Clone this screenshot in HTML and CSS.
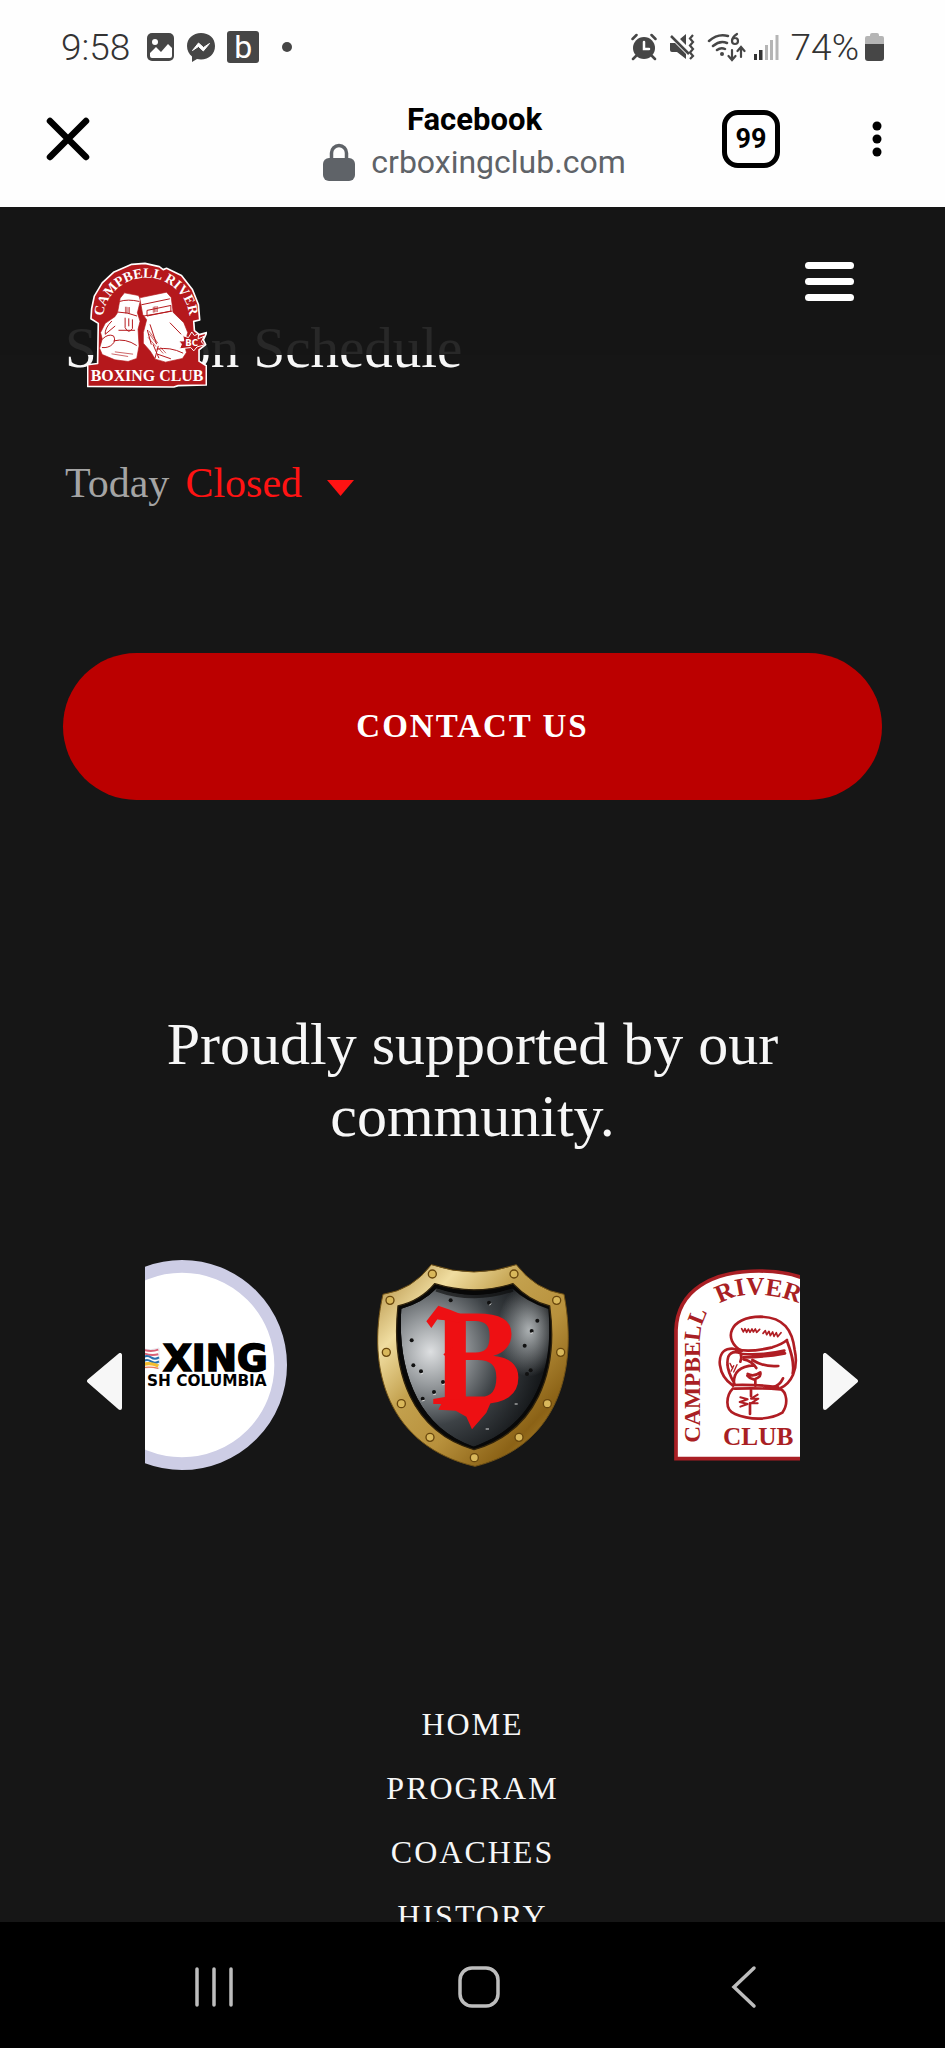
FILE: index.html
```
<!DOCTYPE html>
<html lang="en">
<head>
    <meta charset="UTF-8">
    <meta name="viewport" content="width=device-width, initial-scale=1.0">
    <title>Campbell River Boxing Club</title>
    <link rel="stylesheet" href="styles.css">
</head>
<body>
    <div class="status-bar">
        <span class="clock">9:58</span>
        <svg class="status-photo" width="27" height="28" viewBox="0 0 27 28">
            <rect width="27" height="28" rx="5" fill="#464646"/>
            <circle cx="8" cy="9" r="3" fill="#fff"/>
            <path d="M3 20l6-6 5 5 7-8 4 4v8q0 2-2 2H5q-2 0-2-2z" fill="#fff"/>
        </svg>
        <svg class="status-messenger" width="30" height="30" viewBox="0 0 30 30">
            <path d="M15 1C7 1 1 6.500 1 14c0 4.500 2 8 5 10.500V30l5-3c1.300.3 2.600.5 4 .5 8 0 14-5.500 14-13.500S23 1 15 1z" fill="#464646"/>
            <path d="M6.500 18.500l6-7.500 5 4.500 6-4-6.200 7.500-4.800-4.500z" fill="#fff" stroke="#fff" stroke-linejoin="round"/>
        </svg>
        <span class="status-b">b</span>
        <span class="status-dot"></span>
        <div class="status-right">
            <svg width="26" height="28" viewBox="0 0 26 28" fill="none" stroke="#464646" stroke-linecap="round">
                <circle cx="13" cy="15" r="11" fill="#464646" stroke="none"/>
                <path d="M1.500 6l4-4M24.500 6l-4-4M5 23l-3 3M21 23l3 3" stroke-width="2.500"/>
                <path d="M13 9v7h5" stroke="#fff" stroke-width="2.500"/>
            </svg>
            <svg width="26" height="28" viewBox="0 0 26 28" fill="none" stroke="#464646">
                <path d="M1 10h5l11 11v5l-9-7H3q-2 0-2-2zM11 6l6-5v11z" fill="#464646" stroke="none"/>
                <path d="M2 3l18 18" stroke-width="2.500"/>
                <path d="M24 2l-3 3.500 3 3.500-3 3.500 3 3.500-3 3.500 3 3.500-3 3" stroke-width="2.200"/>
            </svg>
            <svg class="wifi" width="39" height="30" viewBox="0 0 39 30" fill="none" stroke="#464646" stroke-width="2.500" stroke-linecap="round">
                <path d="M2 9Q11 1 21 4M6 14q7-6 14-3M10 18q4-3 8-1"/>
                <circle cx="15" cy="22" r="2" fill="#464646" stroke="none"/>
                <path d="M30 2q-5 3-5 7a3 3 0 1 0 6 0 3 3 0 0 0-6 0M25 18v9M21.500 24l3.500 4 3.500-4M34 25V16M30.500 19l3.500-4 3.500 4" stroke-width="2.200"/>
            </svg>
            <svg width="25" height="28" viewBox="0 0 25 28">
                <path d="M0 21h3v6H0zM5 17h3.500v10H5z" fill="#333"/>
                <path d="M11 12h3v15h-3zM16 7h3v20h-3zM21.500 2h3v25h-3z" fill="#b5b5b5"/>
            </svg>
            <span class="battery-text">74%</span>
            <svg class="battery" width="19" height="28" viewBox="0 0 19 28">
                <path d="M0 11V5q0-2 2-2h3V2q0-2 2-2h5q2 0 2 2v1h3q2 0 2 2v6z" fill="#b5b5b5"/>
                <path d="M0 11h19v14q0 3-3 3H3q-3 0-3-3z" fill="#464646"/>
            </svg>
        </div>
    </div>

    <header class="browser-bar">
        <button class="icon-button" type="button" aria-label="Close tab">
            <svg width="44" height="44" viewBox="0 0 44 44" stroke="#000" stroke-width="6.500" stroke-linecap="round">
                <path d="M4 4l36 36M40 4L4 40"/>
            </svg>
        </button>
        <div class="address">
            <div class="address-title">Facebook</div>
            <div class="address-url">
                <svg width="32" height="38" viewBox="0 0 32 38">
                    <path d="M8.500 17v-7a7.500 7.500 0 0 1 15 0v7" fill="none" stroke="#5f6368" stroke-width="3.500"/>
                    <rect y="15" width="32" height="23" rx="6" fill="#5f6368"/>
                </svg>
                <span>crboxingclub.com</span>
            </div>
        </div>
        <div class="browser-actions">
            <button class="tab-count" type="button" aria-label="Open tabs">99</button>
            <button class="icon-button" type="button" aria-label="More options">
                <svg width="52" height="44" viewBox="0 0 52 44">
                    <circle cx="26" cy="9" r="4.500"/>
                    <circle cx="26" cy="22" r="4.500"/>
                    <circle cx="26" cy="35" r="4.500"/>
                </svg>
            </button>
        </div>
    </header>

    <main class="page">
        <div class="site-header">
            <a class="site-logo" href="#home" aria-label="Campbell River Boxing Club">
                <svg width="120" height="126" viewBox="50 38 362 378">
                    <path d="M64 178L72 140 96 100 130 68 185 44 225 41 268 51 280 60 290 56 335 78 368 120 386 165 390 212 372 216 374 244 389 256 411 250 401 272 408 286 388 302 388 336 410 350 410 408 325 410 312 414 52 412 52 347 82 343 84 222 62 208z" fill="#b5181c" stroke="#fff" stroke-width="5" stroke-linejoin="round"/>
                    <path id="logo-arc" d="M98 216A131 131 0 0 1 360 214" fill="none"/>
                    <text class="logo-arc-text"><textPath href="#logo-arc" startOffset="50%">CAMPBELL RIVER</textPath></text>
                    <g fill="#fff" stroke="#b5181c" stroke-width="2">
                        <path d="M150 146L163 130 205 138 212 150 202 190 210 216 204 240 207 290 200 328 174 337 134 332 96 316 88 297 96 269 91 250 105 222 134 202 142 190z"/>
                        <path d="M209 145L290 128 304 144 310 189 342 220 354 250 344 285 350 310 338 328 287 339 256 330 241 306 220 282 220 250 230 211 218 195z"/>
                    </g>
                    <g fill="none" stroke="#b5181c" stroke-width="3">
                        <path d="M148 156q25-8 60 0M143 188q28 0 58 12M214 166l86-18M220 200l88-15M231 183l72-15v17l-72 15z"/>
                        <path d="M165 205v30q10 20 22 3v-28M176 207v24M125 215q-22 22-20 40l30-25M96 270q18-18 34-10 8 14-3 25-12 12-32 10M130 275q36-9 70 14M145 243l50 0"/>
                        <path d="M232 242l12 44M240 225l20 60M249 285l18 42M265 290l-10 38M260 300q40-8 80 12M263 315l40 14M300 220l34 35"/>
                    </g>
                    <g stroke="#b5181c" stroke-width="2">
                        <path d="M166 172v20M170 172v20M174 173v20M178 173v20M250 172v18M254 171v18M258 170v18M262 170v18M236 244l28 38M238 254l22 30M234 264l24 28M264 295l16 18M272 294l16 18M124 314l50 8M134 308l55 7"/>
                    </g>
                    <path d="M366 248l8 11 13-6-2 16 18-8-8 17 9 9-22 6-10 12-9-10-34 4 6-14-8-10 15 0-3-16 17 6z" fill="#b5181c" stroke="#fff" stroke-width="3"/>
                    <text class="logo-bc" x="366" y="291">BC</text>
                    <text class="logo-club" x="231" y="396">BOXING CLUB</text>
                </svg>
            </a>
            <button class="menu-button" type="button" aria-label="Menu">
                <span></span>
                <span></span>
                <span></span>
            </button>
        </div>

        <section class="hours">
            <h2>Session Schedule</h2>
            <div class="today">
                <span>Today</span>
                <button class="hours-toggle" type="button">
                    Closed
                    <svg width="29" height="18" viewBox="0 0 29 18"><path d="M1 1h27L14.500 17z" fill="#ff1313"/></svg>
                </button>
            </div>
        </section>

        <a class="contact-button" href="#contact">CONTACT US</a>

        <section class="sponsors">
            <h2>Proudly supported by our community.</h2>
            <div class="carousel">
                <button class="arrow" type="button" aria-label="Previous">
                    <svg width="35" height="57" viewBox="0 0 35 57"><path d="M2 28L33 2v53z" fill="#f7f7f7" stroke="#f7f7f7" stroke-width="4" stroke-linejoin="round"/></svg>
                </button>
                <div class="slides">
                    <svg class="slide" viewBox="54 90 630 630">
                        <circle cx="369" cy="405" r="296" fill="#fff" stroke="#cdcde5" stroke-width="38"/>
                        <g fill="none" stroke-width="6">
                            <path d="M250 356q25 8 50-2v62q-25-8-50 0z" fill="#fff" stroke="#d9d9e6" stroke-width="2"/>
                            <path d="M252 359q24 8 46 0M252 369q24 10 46 4" stroke="#d96076"/>
                            <path d="M252 382q12-8 24 0t24 0M252 394q12-8 24 0t24 0" stroke="#286fae"/>
                            <path d="M252 404q22-8 46 4" stroke="#f5bd2f" stroke-width="10"/>
                            <path d="M252 413q22-4 46 2" stroke="#ed7654" stroke-width="4"/>
                        </g>
                        <text class="bc-name" x="626" y="422">XING</text>
                        <text class="bc-region" x="623" y="468">SH COLUMBIA</text>
                    </svg>
                    <svg class="slide" viewBox="57 60 630 630">
                        <defs>
                            <linearGradient id="gold" x1="0" y1="0" x2="1" y2="1">
                                <stop offset="0" stop-color="#a98336"/>
                                <stop offset=".22" stop-color="#f0dda0"/>
                                <stop offset=".4" stop-color="#c3a14e"/>
                                <stop offset=".6" stop-color="#b8913c"/>
                                <stop offset=".8" stop-color="#8b6216"/>
                                <stop offset="1" stop-color="#c49b3a"/>
                            </linearGradient>
                            <radialGradient id="steel" cx=".2" cy=".4" r=".85">
                                <stop offset="0" stop-color="#dddfe1"/>
                                <stop offset=".25" stop-color="#969a9d"/>
                                <stop offset=".55" stop-color="#3d4246"/>
                                <stop offset="1" stop-color="#090b0d"/>
                            </radialGradient>
                            <radialGradient id="shine">
                                <stop offset="0" stop-color="#c5cacc" stop-opacity=".85"/>
                                <stop offset="1" stop-color="#c5cacc" stop-opacity="0"/>
                            </radialGradient>
                            <clipPath id="shield-inner">
                                <path d="M157 206Q220 190 263 145 375 185 490 145 530 185 598 207C616 400 550 560 374 620 200 560 145 380 157 206z"/>
                            </clipPath>
                        </defs>
                        <path d="M102 163Q190 150 247 74 375 118 502 74 560 150 645 163C690 400 620 620 378 679 120 620 50 390 102 163z" fill="url(#gold)" stroke="#715216" stroke-width="3"/>
                        <path d="M147 198Q215 182 257 131 375 168 492 131 540 182 602 198C630 400 560 575 375 629 190 575 125 400 147 198z" fill="#080808" stroke="#30230c" stroke-width="4"/>
                        <g clip-path="url(#shield-inner)">
                            <path d="M157 206Q220 190 263 145 375 185 490 145 530 185 598 207C616 400 550 560 374 620 200 560 145 380 157 206z" fill="url(#steel)"/>
                            <ellipse cx="540" cy="270" rx="95" ry="140" fill="url(#shine)"/>
                            <path d="M263 145Q375 185 490 145" fill="none" stroke="#080808" stroke-width="20" opacity=".6"/>
                        </g>
                        <g fill="#111">
                            <circle cx="305" cy="181" r="6"/><circle cx="420" cy="188" r="6"/>
                            <circle cx="565" cy="242" r="6"/><circle cx="548" cy="273" r="6"/>
                            <circle cx="527" cy="317" r="6"/><circle cx="545" cy="391" r="6"/>
                            <circle cx="534" cy="402" r="6"/><circle cx="188" cy="301" r="6"/>
                            <circle cx="193" cy="376" r="6"/><circle cx="216" cy="394" r="6"/>
                            <circle cx="282" cy="426" r="6"/><circle cx="255" cy="456" r="6"/>
                            <circle cx="221" cy="476" r="6"/>
                        </g>
                        <g fill="none" stroke="#ddd" stroke-width="3">
                            <path d="M215 402l7-2M280 434l8-2M253 464l8-2M218 483l9-2M497 492l9 0M410 567l10 0M545 280l7-2M421 195l6-4"/>
                        </g>
                        <text class="shield-letter" x="246" y="492">B</text>
                        <g class="flourish">
                            <path d="M232 244L268 197 305 210 340 224 330 248 290 240 265 238 247 264z"/>
                            <path d="M283 343L312 322v50z"/>
                            <path d="M268 509L284 478 430 476 412 518 369 568 352 530 320 512z"/>
                        </g>
                        <g fill="#d9b85b" stroke="#69470d" stroke-width="4">
                            <circle cx="250" cy="102" r="12"/><circle cx="495" cy="102" r="12"/>
                            <circle cx="123" cy="181" r="12"/><circle cx="623" cy="181" r="12"/>
                            <circle cx="112" cy="337" r="12"/><circle cx="635" cy="337" r="12"/>
                            <circle cx="157" cy="491" r="12"/><circle cx="595" cy="491" r="12"/>
                            <circle cx="243" cy="592" r="12"/><circle cx="510" cy="592" r="12"/>
                            <circle cx="376" cy="653" r="12"/>
                        </g>
                    </svg>
                    <svg class="slide" viewBox="30 60 630 630">
                        <path d="M81 656V270C85 150 190 93 330 93S575 150 579 270v386z" fill="#fff" stroke="#a91f24" stroke-width="11"/>
                        <path id="club-side" d="M153 608V300C153 265 164 232 190 190" fill="none"/>
                        <path id="club-top" d="M212 192C255 165 305 160 350 166S430 177 480 208" fill="none"/>
                        <text class="club-text"><textPath href="#club-side">CAMPBELL</textPath></text>
                        <text class="club-bottom"><textPath href="#club-top">RIVER</textPath></text>
                        <text class="club-bottom" x="222" y="616">CLUB</text>
                        <g fill="none" stroke="#b01d23" stroke-width="8" stroke-linecap="round" stroke-linejoin="round">
                            <path d="M278 333C220 300 240 230 335 230 405 232 430 270 437 330 450 390 425 430 395 444"/>
                            <path d="M265 328Q300 338 370 322 400 312 414 300M280 342Q350 346 406 332M283 352Q345 352 408 340M414 303C428 340 437 370 431 400"/>
                            <path d="M274 365C285 335 260 320 235 328 200 340 205 405 252 437M275 340q-27-10-37 10c-8 25 0 50 18 80M255 434q-5-55 60-58M284 358q25 5 38 26M310 360q35 22 78 18M402 415q-10 22-30 26"/>
                            <path d="M253 435Q330 433 388 442M257 446Q325 443 394 448M252 445C232 465 225 510 258 522 300 540 360 542 400 518 420 490 412 455 394 447"/>
                            <path d="M296 402q18 10 38-5 4 12-15 20v20M314 418q-12-2-19-11M306 449v20M303 490v32"/>
                            <path d="M274 472l22 6-24 8 24 6-22 8M326 464l-20 12 22 0-22 14 20 0" stroke-width="6"/>
                            <path d="M234 374l6 16M243 370l8 16M254 377l-8 17M264 374l-10 22" stroke-width="4"/>
                            <path d="M278 266l5 10 5-10 5 11 5-10 5 10 6-10 4 9 6-9 4 10 9-9M342 280l7-8 4 12 7-10 4 13 7-11 4 13 7-11 4 12 10-12" stroke-width="5"/>
                        </g>
                    </svg>
                </div>
                <button class="arrow" type="button" aria-label="Next">
                    <svg width="35" height="57" viewBox="0 0 35 57"><path d="M33 28L2 2v53z" fill="#f7f7f7" stroke="#f7f7f7" stroke-width="4" stroke-linejoin="round"/></svg>
                </button>
            </div>
        </section>

        <nav class="footer-links">
            <a href="#home">HOME</a>
            <a href="#program">PROGRAM</a>
            <a href="#coaches">COACHES</a>
            <a href="#history">HISTORY</a>
        </nav>
    </main>

    <div class="system-nav">
        <button class="icon-button" type="button" aria-label="Recent apps">
            <svg width="42" height="42" viewBox="0 0 42 42" stroke="#bdbdbd" stroke-width="3.500" stroke-linecap="round"><path d="M4 3v36M21 3v36M38 3v36"/></svg>
        </button>
        <button class="icon-button" type="button" aria-label="Home">
            <svg width="42" height="42" viewBox="0 0 42 42" fill="none" stroke="#bdbdbd" stroke-width="3.500"><rect x="2" y="2" width="38" height="38" rx="12"/></svg>
        </button>
        <button class="icon-button" type="button" aria-label="Back">
            <svg width="26" height="44" viewBox="0 0 26 44" fill="none" stroke="#bdbdbd" stroke-width="3.500" stroke-linecap="round"><path d="M23 3L3 22l20 19"/></svg>
        </button>
    </div>
</body>
</html>
```
FILE: styles.css
```
* {
    box-sizing: border-box;
}
body {
    margin: 0;
    height: 100vh;
    display: flex;
    flex-direction: column;
    background: #fefefe;
    font-family: Roboto, sans-serif;
}
h2 {
    margin: 0;
    font-weight: normal;
    line-height: 72px;
}
button {
    padding: 0;
    border: none;
    background: none;
    font: inherit;
    color: inherit;
    cursor: pointer;
}
a {
    color: inherit;
    text-decoration: none;
}
svg {
    display: block;
}

/* phone status bar */
.status-bar {
    display: flex;
    align-items: center;
    flex-shrink: 0;
    height: 94px;
    padding: 0 61px;
    color: #333;
    font-size: 37px;
}
.clock {
    font-weight: 300;
    margin-right: 17px;
}
.status-photo {
    margin-right: 12px;
}
.status-messenger {
    margin-right: 11px;
}
.status-b {
    width: 32px;
    height: 32px;
    margin-right: 23px;
    border-radius: 3px;
    background: #464646;
    color: #fff;
    font-size: 32px;
    line-height: 32px;
    text-align: center;
}
.status-dot {
    width: 10px;
    height: 10px;
    border-radius: 50%;
    background: #464646;
}
.status-right {
    display: flex;
    align-items: center;
    gap: 12px;
    margin-left: auto;
}
.wifi {
    margin-right: -4px;
}
.battery-text {
    font-weight: 300;
}
.battery {
    margin-left: -6px;
}

/* in-app browser bar */
.browser-bar {
    display: grid;
    grid-template-columns: 1fr auto 1fr;
    align-items: center;
    flex-shrink: 0;
    height: 113px;
    padding: 0 42px 24px 46px;
}
.icon-button {
    justify-self: start;
}
.address {
    padding-top: 4px;
    text-align: center;
}
.address-title {
    font-size: 31px;
    font-weight: bold;
    line-height: 42px;
}
.address-url {
    display: flex;
    align-items: center;
    gap: 16px;
    color: #5f6368;
    font-size: 32px;
    line-height: 42px;
}
.browser-actions {
    display: flex;
    align-items: center;
    justify-content: flex-end;
    gap: 71px;
}
.tab-count {
    width: 58px;
    height: 58px;
    border: 5px solid #000;
    border-radius: 16px;
    color: #000;
    font-size: 27px;
    font-weight: bold;
}

/* website */
.page {
    position: relative;
    flex: 1;
    min-height: 0;
    overflow: hidden;
    padding: 105px 63px 0;
    background: #161616;
    color: #f7f7f7;
    font-family: "Liberation Serif", serif;
}
.site-header {
    position: absolute;
    top: 0;
    left: 0;
    right: 0;
    height: 148px;
    display: flex;
    justify-content: space-between;
    align-items: flex-start;
    padding: 55px 91px 0 87px;
    background: rgba(22, 22, 22, 0.92);
}
.menu-button {
    display: flex;
    flex-direction: column;
    gap: 9px;
    width: 49px;
}
.menu-button span {
    height: 7px;
    border-radius: 4px;
    background: #fff;
}
.hours h2 {
    margin-bottom: 75px;
    padding-left: 2px;
    font-size: 57px;
}
.today {
    display: flex;
    gap: 16px;
    padding-left: 2px;
    color: #a4a4a4;
    font-size: 42px;
    line-height: 48px;
}
.hours-toggle {
    display: flex;
    align-items: center;
    gap: 24px;
    color: #ff1313;
}
.hours-toggle svg {
    margin-top: 10px;
}
.contact-button {
    display: block;
    margin: 146px 0 208px;
    border-radius: 74px;
    background: #bb0000;
    color: #fff;
    font-size: 33px;
    font-weight: bold;
    letter-spacing: 2px;
    line-height: 147px;
    text-align: center;
}
.sponsors h2 {
    margin: 0 80px 108px;
    font-size: 60px;
    text-align: center;
}
.carousel {
    display: flex;
    align-items: center;
    gap: 23px;
    padding: 0 24px;
}
.slides {
    display: flex;
    flex: 1;
    justify-content: center;
    gap: 81px;
    min-width: 0;
    padding-bottom: 32px;
    overflow: hidden;
}
.slide {
    flex: none;
    width: 210px;
    height: 210px;
}
.footer-links {
    display: flex;
    flex-direction: column;
    align-items: center;
    margin-top: 190px;
    font-size: 32px;
    letter-spacing: 2px;
    line-height: 64px;
}

/* lettering in the logos */
.logo-arc-text {
    fill: #fff;
    font-size: 42px;
    font-weight: bold;
    text-anchor: middle;
}
.logo-bc {
    fill: #fff;
    font: bold 26px "DejaVu Sans", sans-serif;
    text-anchor: middle;
}
.logo-club {
    fill: #fff;
    font-size: 48px;
    font-weight: bold;
    text-anchor: middle;
}
.bc-name {
    font: bold 112px "DejaVu Sans", sans-serif;
    stroke: #000;
    stroke-width: 5px;
    text-anchor: end;
}
.bc-region {
    font: bold 46px "DejaVu Sans", sans-serif;
    text-anchor: end;
}
.shield-letter,
.flourish {
    fill: #ee1013;
}
.shield-letter {
    font-size: 410px;
    font-weight: bold;
}
.club-text,
.club-bottom {
    fill: #a91f24;
    font-size: 70px;
    font-weight: bold;
}
.club-bottom {
    font-size: 76px;
}

/* android navigation */
.system-nav {
    display: grid;
    grid-template-columns: repeat(3, 1fr);
    align-items: center;
    flex-shrink: 0;
    height: 126px;
    padding: 4px 69px 0 81px;
    background: #000;
}
.system-nav .icon-button {
    justify-self: center;
}
```
